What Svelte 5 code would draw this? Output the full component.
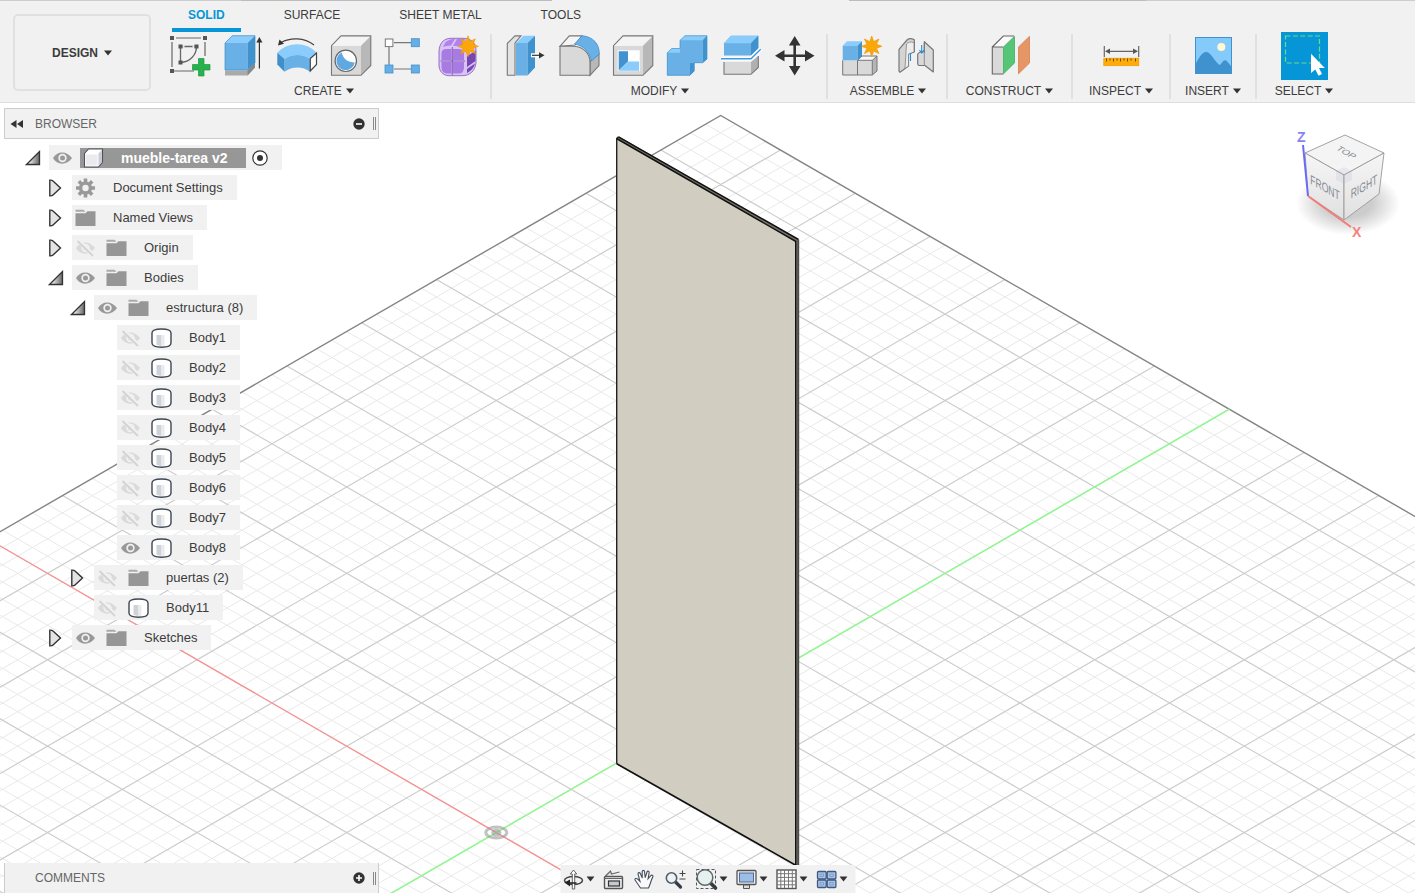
<script>
  const star = (cx, cy, r) => {
    let pts = [];
    for (let k = 0; k < 16; k++) {
      const a = (k * Math.PI) / 8 - Math.PI / 2;
      const q = k % 2 ? r * 0.5 : r;
      pts.push(`${(cx + q * Math.cos(a)).toFixed(1)},${(cy + q * Math.sin(a)).toFixed(1)}`);
    }
    return `<polygon points="${pts.join(' ')}" fill="#fba70a" stroke="#e8960a" stroke-width=".6"/>`;
  };
  const node = (x, y) => `<rect x="${x - 2}" y="${y - 2}" width="4" height="4" fill="#555"/>`;

  const art = {
    sketch: `<path d="M5 4H38V37H5Z" fill="none" stroke="#666" stroke-width="1.2"/><path d="M13.5 28.5V12.5H29.5C29.5 21 23 28 13.5 28.5Z" fill="none" stroke="#666" stroke-width="1.3"/><path d="M7 4h2M34 4h2M5 6v2M5 33v2M38 6v2M15.5 12.5h2M25.5 12.5h2" stroke="#f1f1f1" stroke-width="2"/>${node(5, 4)}${node(38, 4)}${node(5, 37)}${node(13.5, 12.5)}${node(29.5, 12.5)}${node(13.5, 28.5)}<path d="M27 35H43V44H27ZM36 22H43V40H36Z" fill="#f1f1f1"/><path d="M31.5 24.5h5.5v6h6v5.5h-6v6h-5.5v-6h-6v-5.5h6z" fill="#27b24f" stroke="#1c9a41" stroke-width=".7"/>`,
    extrude: `<path d="M4 36.5H26.5L34 28.5V33.5L26.5 41.5H4Z" fill="#aaa"/><path d="M26.5 36.5L34 28.5V33.5L26.5 41.5Z" fill="#888"/><path d="M4 9H26.5V36H4Z" fill="#69b0e6"/><path d="M4 9L11.3 1.7H34L26.5 9Z" fill="#8accfb"/><path d="M26.5 9L34 1.7V28.5L26.5 36Z" fill="#3f92cd"/><path d="M4 36V9L11.3 1.7H34V28.5L26.5 36Z" fill="none" stroke="#3d8dc6" stroke-width=".7"/><path d="M38.4 7V34.5" stroke="#333" stroke-width="1.2"/><path d="M38.4 3L41.5 8.5H35.3Z" fill="#333"/>`,
    revolve: `<path d="M2.3 18.7C13 7.5 31 7.5 41.7 18.7L35 25C28 19.5 17 19.5 9.5 25Z" fill="#8accfb"/><path d="M9.5 25C17 19.5 28 19.5 35 25V37.7C28 32 17 32 9.5 37.7Z" fill="#69b0e6"/><path d="M2.3 18.7L9.5 25V37.7L2.3 30.5Z" fill="#3f8fca"/><path d="M35.3 24.5L41.5 19V30.5L35.3 37Z" fill="#fff" stroke="#444" stroke-width="1.2"/><path d="M39 11C29 3.5 16 3 6 8.5" fill="none" stroke="#444" stroke-width="1.2"/><path d="M3 11.5L4.5 5.5L9 9.8Z" fill="#333"/>`,
    hole: `<path d="M2.5 11.7H32V41.3H2.5Z" fill="#d9d9d9"/><path d="M2.5 11.7L12 1.9H41.8L32 11.7Z" fill="#f4f4f4"/><path d="M32 11.7L41.8 1.9V31.5L32 41.3Z" fill="#b8b8b8"/><path d="M2.5 41.3V11.7L12 1.9H41.8V31.5L32 41.3Z" fill="none" stroke="#777" stroke-width="1.1"/><circle cx="16.8" cy="26.8" r="10.7" fill="#fff" stroke="#666" stroke-width="1.2"/><path d="M12.8 18.5A9.2 9.2 0 1 0 25.7 28.5C19 28.5 14 25 12.8 18.5Z" fill="#5fa9e2"/>`,
    pattern: `<path d="M11 8.7H28M6 13V31M11 35H28" stroke="#777" stroke-width="1.2"/><rect x="2.3" y="5" width="7.6" height="7.6" fill="#fff" stroke="#777"/><g fill="#66aee5" stroke="#3f92cd" stroke-width=".8"><rect x="28.3" y="4.7" width="8" height="8"/><rect x="2" y="31" width="8" height="8"/><rect x="28.3" y="31" width="8" height="8"/></g>`,
    form: `<path d="M2 18C2 10 6 4.3 14 4.3H27C35 5 39 9 39 17V29C38 37 33 41.7 25 41.7H12C6 41.7 2 37 2 31Z" fill="#d9c3f4" stroke="#8455bf" stroke-width=".8"/><path d="M8 9C11 5.5 15 5 18 5L14 11.5Q9 11.5 6 13ZM20 5H28L25 12H16Z" fill="#b181ee"/><path d="M4.5 26V19Q5 15 9 15H14.5V26ZM16 26V15H22Q27 15.5 27 20V26ZM4.5 28H14.5V39.5H10Q5 39 4.5 34ZM16 28H27V34Q26.5 39.5 22 39.5H16Z" fill="#a87be2"/><path d="M30 22L38.5 17V27L30 33ZM30 35L38 29.5Q37 35 30 39Z" fill="#7746b0"/><path d="M3.5 27H28M15.3 13V41" stroke="#6d3fa6" stroke-width=".8"/>${star(31, 12.3, 10.5)}`,
    press: `<path d="M4.3 9.5L12 1.9H18L12 9V41.3H4.3Z" fill="#e3e3e3" stroke="#777" stroke-width="1.1"/><path d="M13 9H24.5V41.5H13Z" fill="#69b0e6"/><path d="M13 9L20.5 1.7H32L24.5 9Z" fill="#8accfb"/><path d="M24.5 9L32 1.7V33.5L24.5 41.5Z" fill="#3f92cd"/><path d="M28 21.3H38" stroke="#fff" stroke-width="4"/><path d="M29 21.3H37" stroke="#333" stroke-width="1.2"/><path d="M41.5 21.3L36 18.2V24.4Z" fill="#333"/>`,
    fillet: `<path d="M3 12.3L12.3 1.9H25L18 11Z" fill="#f5f5f5" stroke="#777" stroke-width="1.1"/><path d="M33 27L42 20V31.5L33 41.3Z" fill="#b8b8b8" stroke="#777" stroke-width="1.1"/><path d="M3 12.3H17C27 13 33 20 33 28V41.3H3Z" fill="#d9d9d9" stroke="#777" stroke-width="1.1"/><path d="M25 1.8C36 2.5 42.5 10 42.3 20L34.5 27C33 19 27 11.5 17.5 10Z" fill="#69b0e6" stroke="#3f92cd" stroke-width=".8"/>`,
    shell: `<path d="M2.5 11.7H32V41.3H2.5Z" fill="#d9d9d9"/><path d="M2.5 11.7L12 1.9H41.8L32 11.7Z" fill="#f4f4f4"/><path d="M32 11.7L41.8 1.9V31.5L32 41.3Z" fill="#b8b8b8"/><path d="M2.5 41.3V11.7L12 1.9H41.8V31.5L32 41.3Z" fill="none" stroke="#777" stroke-width="1.1"/><rect x="6.7" y="16.3" width="22" height="20.8" fill="#fff"/><path d="M7.7 17.3H17V27.5L7.7 36.4Z" fill="#4292cf"/><path d="M7.7 36.7L17 27.5H28V36.7Z" fill="#8accfb"/>`,
    combine: `<path d="M2.3 18.7L6.7 14.5H15V6.3L20 1.7H42V25L37.7 28.7H29V37L25 41.3H2.3Z" fill="#8accfb"/><path d="M37.7 6.3L42 1.7V25L37.7 28.7ZM25 28.7H29.5V37L25 41.3Z" fill="#3f92cd"/><path d="M2.3 18.7H15V6.3H37.7V28.7H25V41.3H2.3Z" fill="#69b0e6"/><path d="M2.3 18.7L6.7 14.5H15V6.3L20 1.7H42V25L37.7 28.7H29V37L25 41.3H2.3Z" fill="none" stroke="#3f92cd" stroke-width=".7"/>`,
    split: `<path d="M5 9.3L12 1.7H39.3V14.3L32 21.5H5Z" fill="#69b0e6"/><path d="M5 9.3L12 1.7H39.3L32 9.3Z" fill="#8accfb"/><path d="M32 9.3L39.3 1.7V14.3L32 21.5Z" fill="#3f92cd"/><path d="M2 24.7H32L41.7 15.3" fill="none" stroke="#fff" stroke-width="4"/><path d="M2 24.7H32L41.7 15.3" fill="none" stroke="#3c9be0" stroke-width="1.5"/><path d="M5 28H32V40.3H5Z" fill="#d9d9d9"/><path d="M32 28L39.3 22V33.5L32 40.3Z" fill="#b0b0b0"/><path d="M5 28V40.3H32L39.3 33.5V22" fill="none" stroke="#777" stroke-width="1.1"/>`,
    move: `<path d="M21.7 8V36M8 21.7H36" stroke="#333" stroke-width="2.6"/><path d="M21.7 2L27.5 11.5H15.9ZM21.7 41.5L27.5 32H15.9ZM2 21.7L11.5 15.9V27.5ZM41.5 21.7L32 15.9V27.5Z" fill="#333"/>`,
    component: `<path d="M3.7 26.3H33.3V41H3.7Z" fill="#d9d9d9"/><path d="M18.5 26.3L23 22H38L33.3 26.3Z" fill="#f7f7f7"/><path d="M33.3 26.3L38 22V37L33.3 41Z" fill="#b5b5b5"/><path d="M3.7 26.3V41H33.3L38 37V22H23L18.5 26.3V41M18.5 26.3H33.3V41M33.3 26.3L38 22" fill="none" stroke="#777" stroke-width="1"/><path d="M3.7 11.7L8 7.3H23L18.5 11.7Z" fill="#8accfb"/><path d="M3.7 11.7H18.5V26.3H3.7Z" fill="#69b0e6"/><path d="M18.5 11.7L23 7.3V22L18.5 26.3Z" fill="#3f92cd"/><circle cx="32.7" cy="12.3" r="9" fill="#f1f1f1"/>${star(32.7, 12.3, 10.3)}`,
    joint: `<g stroke="#777" stroke-width="1.2" stroke-linejoin="round"><path d="M6 15.3L14 6Q17 3.5 21.3 5.8V18L15.5 20V32L7 38.2Q5.8 38 6 35Z" fill="#d4d4d4"/><path d="M13.5 10Q16 7 21 8.5V18L15.5 20V32L12 34.5Z" fill="#ededed" stroke-width=".7"/><path d="M31.3 7.7L40.3 16V38L32 31.5H26Q24.5 31 24.7 29V20Q27 17 31.3 18Z" fill="#d9d9d9"/><path d="M31.3 9V31" stroke-width=".8"/></g><path d="M17.5 19V27M28.7 11V18M26.5 16L28.7 19L31 16" fill="none" stroke="#1c8fe0" stroke-width="1.1"/>`,
    plane: `<path d="M4.3 13H15.3V40H4.3Z" fill="#d9d9d9"/><path d="M4.3 13L15.3 2H26.3L15.3 13Z" fill="#fafafa"/><path d="M15.3 13H4.3V40H15.3M4.3 13L15.3 2H26" fill="none" stroke="#666" stroke-width="1.1"/><path d="M15.5 13L26.5 2.3V29L15.5 39.8Z" fill="#57c578" stroke="#3fae62" stroke-width=".8"/><path d="M30.5 13L41.5 2.3V29L30.5 39.8Z" fill="#e59664" stroke="#d28350" stroke-width=".8"/>`,
    measure: `<path d="M5.3 12V23M39.7 12V23M8 17.3H37" stroke="#666" stroke-width="1.2"/><path d="M6 17.3L11 14.5V20.1ZM39 17.3L34 14.5V20.1Z" fill="#555"/><rect x="4.8" y="24.2" width="35" height="7.5" fill="#ffab0a" stroke="#ea9a05" stroke-width=".7"/><path d="M7.5 24.5v3M11 24.5v2M14.5 24.5v3M18 24.5v2M21.5 24.5v3M25 24.5v2M28.5 24.5v3M32 24.5v2M36.5 24.5v3" stroke="#6b4a0a" stroke-width="1"/>`,
    picture: `<rect x="4.5" y="3.5" width="36" height="36" fill="#84cbfc" stroke="#3f92cd"/><path d="M5 29C9 22 12 17.5 15.5 18C20 18.5 24 28 28.5 31C31 29.5 32 26 34 26.2C36.5 26.5 38 30 40 32V39H5Z" fill="#3f92cd"/><circle cx="30.3" cy="13" r="4" fill="#fff9cf"/>`,
    select: `<rect x="-1" y="-2" width="47" height="48" fill="#0696d7"/><rect x="3.5" y="2" width="34" height="27" fill="none" stroke="#6bdc86" stroke-width="1.2" stroke-dasharray="5 2.4"/><path d="M29 19.7V39L33.3 35.5L36.5 41.7L40 40L37 34H42.8Z" fill="#fff"/>`
  };

  const nav = {
    orbit: `<ellipse cx="12" cy="13.5" rx="9" ry="4" fill="none" stroke="#444" stroke-width="1.5"/><path d="M10.8 22V7H8.8L12 3L15.2 7H13.2V22Z" fill="#fff" stroke="#555" stroke-width=".9"/><path d="M3 15.5L8.5 12.5V19.5Z" fill="#222"/><path d="M8 16H15" stroke="#222" stroke-width="1.4"/>`,
    look: `<path d="M4 9L9 4L10 7L18 5" fill="#ddd" stroke="#666" stroke-width="1.2"/><rect x="3" y="9.5" width="18" height="12" rx="1" fill="#eee" stroke="#555" stroke-width="1.4"/><rect x="7" y="14" width="11" height="5" fill="#c4cad2" stroke="#333" stroke-width="1.2"/><path d="M3 11.5H21" stroke="#666"/>`,
    pan: `<path d="M8 21C6 18 4 15 2.5 13C2 11.5 4 11 5.2 12.2L7.5 14.5L5.5 7C5.3 5.5 7.2 5 7.8 6.6L9.8 11L9.7 4.5C9.8 3 11.8 3 12 4.5L12.7 10.7L14.5 5C15.2 3.5 17 4.2 16.6 5.8L15.6 11.8L18.5 8.5C19.8 7.5 21 8.8 20.2 10.1C18.5 13 18 17 16 21Z" fill="#fafafa" stroke="#444f5c" stroke-width="1.1"/>`,
    zoom: `<path d="M11.5 14.5L17 20" stroke="#333c48" stroke-width="3.2" stroke-linecap="round"/><circle cx="8" cy="11" r="5.2" fill="#eef4f4" stroke="#52606c" stroke-width="1.6"/><path d="M16 6.5H22M19 3.5V9.5M16 12H22" stroke="#444" stroke-width="1.1"/>`,
    window: `<rect x="2" y="2.5" width="19" height="19" fill="none" stroke="#555" stroke-dasharray="3 2"/><path d="M16 16L21 21" stroke="#333c38" stroke-width="3.6" stroke-linecap="round"/><circle cx="10.5" cy="10.5" r="7.8" fill="#e5f0ef" stroke="#5b6a6c" stroke-width="1.5"/>`,
    display: `<rect x="2.5" y="3.5" width="19" height="14" rx="1" fill="#eee" stroke="#555" stroke-width="1.3"/><rect x="5" y="6" width="14" height="9" fill="#9bbde6" stroke="#4f6d95"/><path d="M9 18H15V21.5H9Z" fill="#ddd" stroke="#555"/>`,
    grid: `<rect x="2.5" y="3" width="19" height="18.5" fill="#fff" stroke="#555" stroke-width="1.4"/><path d="M6.3 3V21M10 3V21M14 3V21M17.8 3V21M3 6.7H21M3 10.4H21M3 14.1H21M3 17.8H21" stroke="#777" stroke-width="1"/>`,
    views: `<g fill="#a9c3e6" stroke="#40597f" stroke-width="1.3"><rect x="3" y="4.5" width="8.7" height="7.5" rx="1"/><rect x="12.7" y="4.5" width="8.7" height="7.5" rx="1"/><rect x="3" y="13" width="8.7" height="7.5" rx="1"/><rect x="12.7" y="13" width="8.7" height="7.5" rx="1"/></g><path d="M5.5 7h3.5v2.5h-3.5zM15.2 7h3.5v2.5h-3.5zM5.5 15.5h3.5v2.5h-3.5zM15.2 15.5h3.5v2.5h-3.5z" fill="none" stroke="#7595c6" stroke-width=".8"/>`
  };

  const leaf = {
    eye: `<path d="M1 10C5 2.5 15 2.5 20 10C15 17.5 5 17.5 1 10Z" fill="#999"/><circle cx="10.5" cy="10" r="4.2" fill="#f1f1f1"/><circle cx="10.5" cy="10" r="2.5" fill="#999"/>`,
    hidden: `<path d="M1 10C5 2.5 15 2.5 20 10C15 17.5 5 17.5 1 10Z" fill="#dadada"/><circle cx="10.5" cy="10" r="4.2" fill="#f1f1f1"/><circle cx="10.5" cy="10" r="2.5" fill="#dadada"/><path d="M3 2L19 18" stroke="#f1f1f1" stroke-width="4.2"/><path d="M2.5 3L18 18" stroke="#d3d3d3" stroke-width="1.8"/>`,
    folder: `<path d="M0.5 1.8H8.5L10.5 3.8H0.5Z" fill="#aaa"/><path d="M0.5 5.3H10.5L12.5 3.3H20.5V18H0.5Z" fill="#969696"/>`,
    gear: `<g stroke="#999" stroke-width="3.6"><path d="M10.5 0.5V19.5M1 10H20M3.8 3.3L17.2 16.7M17.2 3.3L3.8 16.7"/></g><circle cx="10.5" cy="10" r="6.6" fill="#999"/><circle cx="10.5" cy="10" r="3.2" fill="#f1f1f1"/>`,
    body: `<path d="M1 5Q1 1 10.5 1Q20 1 20 5V15Q20 19.2 10.5 19.2Q1 19.2 1 15Z" fill="#fff" stroke="#3f4854" stroke-width="1.4"/><path d="M5.5 7H10.5V18Q7 17.8 5.5 16.8Z" fill="#cfd2d8"/><path d="M10.5 7H13.5V17.8H10.5Z" fill="#e8eaed"/>`,
    cube: `<path d="M1.5 5.5L5.5 1H19.5V14L15.5 19H1.5Z" fill="#fff" stroke="#50545a" stroke-width="1.1"/><path d="M3 6.5H14.5V17.5H3Z" fill="#ebebee"/><path d="M15.5 5.5L19 1.8V13.8L15.5 18Z" fill="#c9ccd4"/>`
  };

  const groups = [
    { name: 'CREATE', cls: 'wide', icons: ['sketch', 'extrude', 'revolve', 'hole', 'pattern', 'form'] },
    { name: 'MODIFY', cls: 'wide', icons: ['press', 'fillet', 'shell', 'combine', 'split', 'move'] },
    { name: 'ASSEMBLE', cls: 'wide', icons: ['component', 'joint'] },
    { name: 'CONSTRUCT', cls: 'g-large', icons: ['plane'] },
    { name: 'INSPECT', cls: 'g-mid', icons: ['measure'] },
    { name: 'INSERT', cls: 'g-small', icons: ['picture'] },
    { name: 'SELECT', cls: 'g-last', icons: ['select'] }
  ];
  const tabs = ['SOLID', 'SURFACE', 'SHEET METAL', 'TOOLS'];

  const rows = [
    { label: 'mueble-tarea v2', level: 0, arrow: 'open', eye: 'eye', icon: 'cube', root: true },
    { label: 'Document Settings', level: 1, arrow: 'closed', icon: 'gear' },
    { label: 'Named Views', level: 1, arrow: 'closed', icon: 'folder' },
    { label: 'Origin', level: 1, arrow: 'closed', eye: 'hidden', icon: 'folder' },
    { label: 'Bodies', level: 1, arrow: 'open', eye: 'eye', icon: 'folder' },
    { label: 'estructura (8)', level: 2, arrow: 'open', eye: 'eye', icon: 'folder' },
    ...[1, 2, 3, 4, 5, 6, 7, 8].map((n) => ({ label: 'Body' + n, level: 3, eye: n === 8 ? 'eye' : 'hidden', icon: 'body' })),
    { label: 'puertas (2)', level: 2, arrow: 'closed', eye: 'hidden', icon: 'folder' },
    { label: 'Body11', level: 2, eye: 'hidden', icon: 'body' },
    { label: 'Sketches', level: 1, arrow: 'closed', eye: 'eye', icon: 'folder' }
  ];

  const navItems = [
    { icon: 'orbit', label: 'Orbit', menu: true },
    { icon: 'look', label: 'Look at' },
    { icon: 'pan', label: 'Pan' },
    { icon: 'zoom', label: 'Zoom' },
    { icon: 'window', label: 'Zoom window', menu: true },
    { icon: 'display', label: 'Display settings', menu: true },
    { icon: 'grid', label: 'Grid and snaps', menu: true },
    { icon: 'views', label: 'Viewports', menu: true }
  ];

  // Ground grid in isometric projection: i runs up-right, j runs up-left.
  const O = [496.3, 832.6], U = 74.8, V = 43.2, I = 49, J = 34, FAR = -80;
  const P = (i, j) => `${(O[0] + ((i - j) * U) / 5).toFixed(1)} ${(O[1] - ((i + j) * V) / 5).toFixed(1)}`;
  let minor = '', major = '';
  for (let k = FAR; k <= I; k++) {
    const s = `M${P(k, FAR)}L${P(k, J)}`;
    if (k % 5 === 0) major += s; else minor += s;
  }
  for (let k = FAR; k <= J; k++) {
    const s = `M${P(FAR, k)}L${P(I, k)}`;
    if (k % 5 === 0) major += s; else minor += s;
  }
  const edge = `M${P(I, FAR)}L${P(I, J)}L${P(FAR, J)}`;
</script>

{#snippet caret()}<svg class="caret" viewBox="0 0 8 6" aria-hidden="true"><path d="M0 0.5H8L4 5.5Z" fill="#333" /></svg>{/snippet}

<div class="app">
  <header>
    <div class="strip"></div>
    <div class="ribbon">
      <button class="design">DESIGN {@render caret()}</button>
      <div class="tools">
        <nav class="tabs" aria-label="Toolbar tabs">
          {#each tabs as t, n}<button class="tab" class:active={n === 0}>{t}</button>{/each}
        </nav>
        <div class="groups">
          {#each groups as g}
            <section class="group {g.cls}" aria-label={g.name}>
              <div class="icons">
                {#each g.icons as ic}
                  <button class="tool" aria-label={ic}><svg viewBox="0 0 44 44">{@html art[ic]}</svg></button>
                {/each}
              </div>
              <button class="glabel">{g.name}{@render caret()}</button>
            </section>
          {/each}
        </div>
      </div>
    </div>
  </header>

  <main>
    <svg class="scene" viewBox="0 103 1415 790" preserveAspectRatio="xMinYMin slice" aria-hidden="true">
      <path d={minor} stroke="#e9e9e9" fill="none" />
      <path d={major} stroke="#cdcdcd" stroke-width="1.2" fill="none" />
      <path d={edge} stroke="#858585" stroke-width="1.4" fill="none" />
      <path d="M{P(0, FAR)}L{P(0, J)}" stroke="#ff8f8f" stroke-width="1.2" />
      <path d="M{P(FAR, 0)}L{P(I, 0)}" stroke="#8cfb8c" stroke-width="1.4" />
      <ellipse cx="496.3" cy="832.6" rx="10.5" ry="5.5" fill="none" stroke="#999" stroke-opacity=".6" stroke-width="3" />
      <ellipse cx="496.3" cy="832.6" rx="5" ry="4" fill="#999" fill-opacity=".6" />
      <path d="M616.5 138L619 136.5L798.5 239.5V893L796 864.5L616.5 763.5Z" fill="#77756b" />
      <path d="M616.5 138.5L796 241V866L616.5 763.8Z" fill="#d1cec1" />
      <path d="M616.5 138.5L796 241.5M618.5 136.8L798.5 239.5" stroke="#111" stroke-width="1.5" fill="none" />
      <path d="M616.7 763.8V138.5L618.5 136.8" stroke="#222" stroke-width="1.4" fill="none" />
      <path d="M616.7 763.8L797 866" stroke="#111" stroke-width="1.6" />
      <path d="M795.7 241V866" stroke="#111" stroke-width="1.4" />
      <path d="M798.3 239.5V867" stroke="#4d4c48" stroke-width="1.8" />
    </svg>

    <aside>
      <div class="bar">
        <button class="plain" aria-label="Collapse"><svg width="14" height="10" viewBox="0 0 14 10"><path d="M0.5 5L6.5 1V9ZM7 5L13 1V9Z" fill="#333" /></svg></button>
        <span class="title">BROWSER</span>
        <button class="plain" aria-label="Minimize"><svg width="12" height="12" viewBox="0 0 12 12"><circle cx="6" cy="6" r="5.7" fill="#333" /><path d="M3 6H9" stroke="#fff" stroke-width="1.6" /></svg></button>
        <span class="grip"></span>
      </div>
      <ul class="tree">
        {#each rows as r}
          <li class="lv{r.level}">
            <span class="twist">
              {#if r.arrow === 'open'}
                <svg width="16" height="16" viewBox="0 0 16 16"><defs><linearGradient id="tw"><stop offset="0.2" stop-color="#eee" /><stop offset="1" stop-color="#666" /></linearGradient></defs><path d="M1.5 14.5L14.5 1.5V14.5Z" fill="url(#tw)" stroke="#333" stroke-width="1.3" /></svg>
              {:else if r.arrow}
                <svg width="16" height="18" viewBox="0 0 16 18"><path d="M1.8 1.2Q4 1 5 2L12.5 9L5 16Q4 17 1.8 16.8Z" fill="#e4e4e4" stroke="#333" stroke-width="1.4" /></svg>
              {/if}
            </span>
            <div class="row">
              {#if r.eye}<button class="plain eye" aria-label="Toggle visibility"><svg width="21" height="20" viewBox="0 0 21 20">{@html leaf[r.eye]}</svg></button>{/if}
              <span class="item" class:root={r.root}>
                <svg width="21" height="20" viewBox="0 0 21 20">{@html leaf[r.icon]}</svg>
                <span>{r.label}</span>
              </span>
              {#if r.root}
                <button class="plain" aria-label="Activate component"><svg width="16" height="16" viewBox="0 0 16 16"><circle cx="8" cy="8" r="7.2" fill="#fff" stroke="#333" stroke-width="1.2" /><circle cx="8" cy="8" r="3" fill="#333" /></svg></button>
              {/if}
            </div>
          </li>
        {/each}
      </ul>
      <div class="bar comments">
        <span class="title">COMMENTS</span>
        <button class="plain" aria-label="Expand"><svg width="12" height="12" viewBox="0 0 12 12"><circle cx="6" cy="6" r="5.7" fill="#333" /><path d="M3 6H9M6 3V9" stroke="#fff" stroke-width="1.6" /></svg></button>
        <span class="grip"></span>
      </div>
    </aside>

    <div class="viewcube">
      <svg width="135" height="140" viewBox="0 0 135 140" role="img" aria-label="View cube">
        <defs>
          <radialGradient id="sh"><stop offset="0.45" stop-color="#000" stop-opacity=".2" /><stop offset="1" stop-color="#000" stop-opacity="0" /></radialGradient>
          <linearGradient id="fr" x2="0" y2="1"><stop offset="0" stop-color="#f6f6f6" /><stop offset="1" stop-color="#e0e0e0" /></linearGradient>
        </defs>
        <ellipse cx="68" cy="88" rx="52" ry="32" fill="url(#sh)" />
        <g stroke="#999" stroke-width=".9" stroke-linejoin="round">
          <path d="M25 38L65 20L104 38L64 60Z" fill="#f4f4f4" />
          <path d="M25 38L64 60V105L28 81Z" fill="url(#fr)" />
          <path d="M64 60L104 38L99 79L64 105Z" fill="url(#fr)" />
        </g>
        <path d="M64 52L72 56V65L64 69L56 65V56Z" fill="#9fb0c8" fill-opacity=".16" />
        <path d="M23 30L28 81" stroke="#6b6bf5" stroke-width="2" />
        <path d="M28 81L71 112" stroke="#f57b7b" stroke-width="2" />
        <g class="face" text-anchor="middle">
          <text transform="matrix(.86 .5 -.7 .5 64 39)">TOP</text>
          <text transform="matrix(.86 .5 0 1.3 45 77)">FRONT</text>
          <text transform="matrix(.86 -.5 0 1.3 84 76)">RIGHT</text>
        </g>
        <text class="axis" x="17" y="27" fill="#8585f0">Z</text>
        <text class="axis" x="72" y="122" fill="#f58080">X</text>
      </svg>
    </div>

    <div class="navbar" role="toolbar" aria-label="Navigation">
      {#each navItems as n}
        <button class="plain" aria-label={n.label}><svg width="24" height="24" viewBox="0 0 24 24">{@html nav[n.icon]}</svg>{#if n.menu}{@render caret()}{/if}</button>
      {/each}
    </div>
  </main>
</div>

<style>
  :global(body) { margin: 0; }
  .app {
    min-height: 100vh;
    display: flex;
    flex-direction: column;
    background: #fff;
    color: #3c3c3c;
    font: 12px/16px "Liberation Sans", Arial, sans-serif;
    overflow: hidden;
  }
  button { font: inherit; color: inherit; background: none; border: 0; padding: 0; }
  svg { display: block; flex: none; }
  header { background: #f1f1f1; border-bottom: 1px solid #dedede; }
  .strip {
    height: 1px;
    background: linear-gradient(90deg, #cdcdcd 17%, #bcbcbc 17% 39%, #f1f1f1 39% 60%, #bcbcbc 60% 81%, #cdcdcd 81%);
  }
  .ribbon { display: flex; }
  .design {
    width: 138px;
    height: 77px;
    margin: 13px 5px 0 13px;
    border: 2px solid #e0e0e0;
    border-radius: 5px;
    box-sizing: border-box;
    font-weight: bold;
    display: flex;
    align-items: center;
    justify-content: center;
    gap: 6px;
    flex: none;
  }
  .caret { width: 8px; height: 6px; }
  .tools { flex: 1; min-width: 0; }
  .tabs { display: flex; gap: 27px; padding-left: 16px; }
  .tab { height: 31px; padding: 0 16px; border-bottom: 4px solid transparent; box-sizing: border-box; }
  .tab.active { color: #0696d7; font-weight: bold; border-color: #0696d7; }
  .groups { display: flex; padding: 2px 0 3px; }
  .group {
    display: flex;
    flex-direction: column;
    align-items: center;
    box-sizing: border-box;
    border-right: 2px solid #e0e0e0;
    flex: none;
  }
  .wide { padding: 0 4px 0 6px; }
  .g-large { min-width: 125px; }
  .g-mid { min-width: 98px; }
  .g-small { min-width: 86px; }
  .g-last { min-width: 94px; border: 0; }
  .icons { display: flex; }
  .tool { width: 54px; height: 44px; display: flex; justify-content: center; }
  .tool svg { width: 44px; height: 44px; overflow: visible; }
  .glabel { display: flex; align-items: center; gap: 4px; margin-top: 5px; height: 16px; }

  main { position: relative; flex: 1; display: grid; grid-template-columns: auto 1fr; }
  .scene { position: absolute; inset: 0; width: 100%; height: 100%; }
  aside { position: relative; display: flex; flex-direction: column; padding: 5px 0 0 4px; width: 375px; }
  .bar {
    display: flex;
    align-items: center;
    box-sizing: border-box;
    height: 31px;
    padding: 0 2px 0 5px;
    gap: 11px;
    background: #f1f1f1;
    border: 1px solid #ccc;
    color: #666;
  }
  .bar .title { flex: 1; }
  .comments { border-width: 0 1px; padding-left: 30px; margin-top: auto; height: 30px; }
  .bar .grip { width: 1px; height: 13px; border: solid #888; border-width: 0 1px; margin-left: -3px; }
  .tree { list-style: none; margin: 6px 0 0; padding: 0; display: grid; gap: 5px; font-size: 13px; }
  li { display: flex; align-items: center; height: 25px; }
  .lv0 { padding-left: 21px; }
  .lv1 { padding-left: 44px; }
  .lv2 { padding-left: 66px; }
  .lv3 { padding-left: 89px; }
  .twist { width: 24px; }
  .row { display: flex; align-items: center; height: 25px; padding: 0 14px 0 3px; background: #f1f1f1; }
  .eye { width: 31px; }
  .item { display: flex; align-items: center; gap: 17px; white-space: nowrap; }
  .root {
    background: #979797;
    color: #fff;
    font-size: 14px;
    font-weight: bold;
    padding: 0 18px 0 3px;
    margin: 0 6px 0 -3px;
    height: 20px;
  }
  .viewcube { position: relative; justify-self: end; align-self: start; padding-top: 12px; }
  .face { font-size: 10px; fill: #858a92; }
  .axis { font-size: 14px; font-weight: bold; }
  .navbar {
    position: absolute;
    bottom: 0;
    left: 50%;
    transform: translateX(-50%);
    display: flex;
    gap: 7px;
    padding: 2px 8px 2px 1px;
    background: #f1f1f1;
  }
  .navbar button { display: flex; align-items: center; gap: 1px; }
</style>
